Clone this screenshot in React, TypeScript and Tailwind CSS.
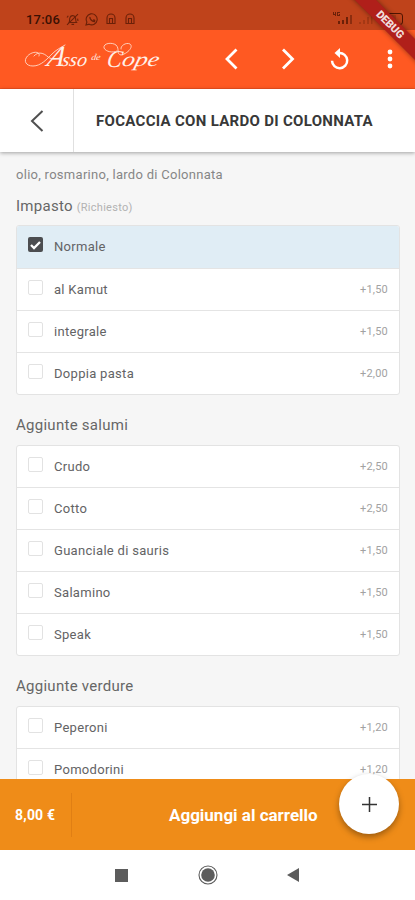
import { clsx } from "clsx";

type Option = { name: string; price?: string; checked?: boolean };

const impasto: Option[] = [
  { name: "Normale", checked: true },
  { name: "al Kamut", price: "+1,50" },
  { name: "integrale", price: "+1,50" },
  { name: "Doppia pasta", price: "+2,00" },
];

const salumi: Option[] = [
  { name: "Crudo", price: "+2,50" },
  { name: "Cotto", price: "+2,50" },
  { name: "Guanciale di sauris", price: "+1,50" },
  { name: "Salamino", price: "+1,50" },
  { name: "Speak", price: "+1,50" },
];

const verdure: Option[] = [
  { name: "Peperoni", price: "+1,20" },
  { name: "Pomodorini", price: "+1,20" },
];

function StatusBar() {
  return (
    <div className="h-[30px] shrink-0 bg-[#bf431b] flex items-center pt-[8px] pl-[26px] pr-[12px] text-[#6b2008]">
      <span className="text-[13px] leading-none font-medium tracking-[0.2px] text-[#3a1003] w-[40px]">
        17:06
      </span>
      {/* muted bell */}
      <svg className="w-[13px] h-[13px]" viewBox="0 0 13 13" fill="none" stroke="currentColor" strokeWidth="1.1">
        <path d="M3 9.5C4 8 3.3 6 4 4.5 5 2.2 8 2 9.3 4.2 10 6 9.3 8 10.6 9.5ZM5.5 11.4h2.6M1 11.8 12 1.2M1 4.5 2.3 2.7M12 8 11.6 5.6" />
      </svg>
      {/* whatsapp */}
      <svg className="w-[14px] h-[13px] ml-[6px]" viewBox="0 0 14 13" fill="none" stroke="currentColor" strokeWidth="1.1">
        <path d="M1 12 1.9 9A5.5 5.5 0 1 1 4.2 11.2Z" />
        <path d="M5 4C4.6 6 7 8.7 9.4 8.6L9.6 7.4 8.3 6.7" strokeWidth="1.4" />
      </svg>
      {[0, 1].map((i) => (
        <svg
          key={i}
          className={clsx("w-[10px] h-[12px]", i === 0 ? "ml-[7px]" : "ml-[9px]")}
          viewBox="0 0 10 12"
          fill="none"
          stroke="currentColor"
          strokeWidth="1.1"
        >
          <path d="M1 10.5V5a4 4 0 0 1 8 0v5.5ZM3.5 10V5.5h3V10" />
        </svg>
      ))}
      {/* 4G signal, second sim without coverage */}
      <svg className="ml-auto w-[42px] h-[14px]" viewBox="0 0 42 14" fill="currentColor">
        <path d="M1 0h1v2h1V0h1v4H3V3H1ZM5 0h3v1H6v2h1V2h1v2H5Z" />
        <path d="M6 9h2v3H6ZM10 8h2v4h-2ZM14 5h2v7h-2Z" />
        <path opacity=".6" d="M18 3h2v9h-2Z" />
        <path opacity=".3" d="M27 10h2v2h-2ZM31 8h2v4h-2ZM35 5h2v7h-2ZM39 3h1.5v9H39Z" />
      </svg>
      <div className="ml-[5px] w-[24px] h-[12px] rounded-[3px] border border-[#501400] p-px">
        <div className="h-full w-[15px] bg-[#501400]/20" />
      </div>
    </div>
  );
}

function DebugRibbon() {
  return (
    <div className="absolute right-0 top-0 w-[90px] h-[90px] overflow-hidden">
      <div className="absolute left-[5px] top-[17px] w-[120px] h-[15px] rotate-45 bg-[#b01f1a] shadow-[0_0_5px_rgba(0,0,0,0.45)] text-center text-[11px] leading-[15px] font-black tracking-[-0.2px] text-[#f0dcdc]">
        DEBUG
      </div>
    </div>
  );
}

function Logo() {
  return (
    <svg
      className="w-[140px] h-[36px] shrink-0"
      viewBox="0 0 140 36"
      fill="none"
      stroke="#ffd9c8"
      strokeWidth="0.9"
      strokeLinecap="round"
      fontFamily="'Liberation Serif', serif"
      fontStyle="italic"
    >
      {/* flourishes around the wordmark */}
      <path d="M15 15C17 10 8 10 3.5 15 -1 20 2 25 9 25 17 25 23 18 28 13 32 9 36 7 41 4" />
      <path d="M10 15C14 10 20 12 24 16 28 19 33 18 38 16" />
      <path d="M93 10C89 12 82 11 80 7 79 2 88 1 92 4 96 8 92 13 97 14 103 13 110 6 106 3 102 1 96 5 97 8" />
      <g fill="#fff0e9" stroke="none">
        <text transform="translate(22 25) skewX(-20)" fontSize="29" textLength="16" lengthAdjust="spacingAndGlyphs">
          A
        </text>
        <text transform="translate(37 25) skewX(-12)" fontSize="19" textLength="25" lengthAdjust="spacingAndGlyphs">
          sso
        </text>
        <text transform="translate(67 19) skewX(-10)" fontSize="9" textLength="9" lengthAdjust="spacingAndGlyphs">
          de
        </text>
        <text transform="translate(82 26) skewX(-10)" fontSize="24" textLength="15" lengthAdjust="spacingAndGlyphs">
          C
        </text>
        <text transform="translate(97 25) skewX(-14)" fontSize="20" textLength="37" lengthAdjust="spacingAndGlyphs">
          ope
        </text>
      </g>
    </svg>
  );
}

function AppBar() {
  return (
    <div className="h-[59px] shrink-0 bg-[#ff5922] border-b border-[#f0501e] flex items-center pl-[24px] text-white">
      <Logo />
      <svg className="ml-[60px] w-[14px] h-[22px]" viewBox="0 0 14 22" fill="none" stroke="currentColor" strokeWidth="2.8">
        <path d="M12.5 1.5 3 11 12.5 20.5" />
      </svg>
      <svg className="ml-[43px] w-[14px] h-[22px]" viewBox="0 0 14 22" fill="none" stroke="currentColor" strokeWidth="2.8">
        <path d="M2 1.5 11.5 11 2 20.5" />
      </svg>
      <svg className="ml-[35px] w-[20px] h-[22px]" viewBox="0 0 20 22" fill="none" stroke="currentColor" strokeWidth="2.5">
        <path d="M9 5A7.6 7.6 0 1 1 2 12.8" />
        <path d="M10 0V10L4.5 5Z" fill="currentColor" stroke="none" />
      </svg>
      <svg className="ml-[37px] w-[6px] h-[20px]" viewBox="0 0 6 20" fill="currentColor">
        <circle cx="3" cy="3" r="2.4" />
        <circle cx="3" cy="10" r="2.4" />
        <circle cx="3" cy="17" r="2.4" />
      </svg>
    </div>
  );
}

function Checkbox({ checked }: { checked?: boolean }) {
  if (checked) {
    return (
      <span className="w-[15px] h-[15px] rounded-[2px] bg-[#4c4d50] flex items-center justify-center">
        <svg className="w-[11px] h-[10px]" viewBox="0 0 11 10" fill="none" stroke="#fff" strokeWidth="2.3">
          <path d="M1 5 4 8 10 2" />
        </svg>
      </span>
    );
  }
  return <span className="w-[15px] h-[15px] rounded-[2px] border border-[#e2e2e2] bg-white" />;
}

function OptionList({ options }: { options: Option[] }) {
  return (
    <div className="rounded-[3px] border border-[#e3e3e3] bg-white overflow-hidden">
      {options.map((o, i) => (
        <div
          key={o.name}
          className={clsx(
            "flex items-center pl-[11px] pr-[11px]",
            i < options.length - 1 && "border-b border-[#e4e4e4]",
            o.checked ? "h-[43px] bg-[#e0edf5]" : i === options.length - 1 ? "h-[41px]" : "h-[42px]"
          )}
        >
          <span className="pb-[5px] flex">
            <Checkbox checked={o.checked} />
          </span>
          <span className="ml-[11px] text-[13px] leading-[18px] tracking-[0.3px] text-[#636365]">{o.name}</span>
          <span className="ml-auto text-[11px] leading-[18px] tracking-[0.2px] text-[#a2a2a2]">{o.price}</span>
        </div>
      ))}
    </div>
  );
}

export default function App() {
  return (
    <div className="relative w-[415px] h-[900px] overflow-hidden flex flex-col bg-white font-['Roboto',sans-serif]">
      <StatusBar />
      <AppBar />

      <header className="relative h-[63px] shrink-0 bg-white flex shadow-[0_1px_4px_rgba(0,0,0,0.35)]">
        <div className="w-[74px] border-r border-[#e0e0e0] flex items-center justify-center">
          <svg className="w-[14px] h-[22px]" viewBox="0 0 14 22" fill="none" stroke="#505050" strokeWidth="2">
            <path d="M12.5 1 2 11 12.5 21" />
          </svg>
        </div>
        <h1 className="pl-[22px] leading-[65px] text-[15px] font-bold tracking-[0.3px] text-[#383838] whitespace-nowrap">
          FOCACCIA CON LARDO DI COLONNATA
        </h1>
      </header>

      <main className="h-[627px] shrink-0 overflow-hidden bg-[#f6f6f6] pl-[16px] pr-[15px]">
        <p className="mt-[13px] text-[13px] leading-[20px] tracking-[0.28px] text-[#868686]">
          olio, rosmarino, lardo di Colonnata
        </p>
        <h2 className="mt-[10px] h-[30px] text-[15px] leading-[22px] tracking-[0.27px] text-[#666]">
          Impasto <span className="text-[11px] text-[#b2b2b2]">(Richiesto)</span>
        </h2>
        <OptionList options={impasto} />
        <h2 className="mt-[19px] h-[31px] text-[15px] leading-[22px] tracking-[0.27px] text-[#666]">Aggiunte salumi</h2>
        <OptionList options={salumi} />
        <h2 className="mt-[19px] h-[31px] text-[15px] leading-[22px] tracking-[0.27px] text-[#666]">Aggiunte verdure</h2>
        <OptionList options={verdure} />
      </main>

      <footer className="h-[71px] shrink-0 bg-[#ef8c18] flex items-center text-white font-bold">
        <div className="w-[72px] h-[44px] border-r border-[#e07f14] pl-[15px] text-[14px] leading-[44px] tracking-[0.2px]">
          8,00 €
        </div>
        <div className="pl-[97px] text-[17px] leading-[44px] whitespace-nowrap">Aggiungi al carrello</div>
      </footer>

      <nav className="h-[50px] flex items-center pl-[115px]">
        <div className="w-[13px] h-[13px] bg-[#5c5c5c]" />
        <svg className="ml-[70px] w-[20px] h-[20px]" viewBox="0 0 20 20" fill="#5c5c5c">
          <circle cx="10" cy="10" r="9" fill="none" stroke="#5c5c5c" strokeWidth="1.1" />
          <circle cx="10" cy="10" r="6.8" />
        </svg>
        <svg className="ml-[69px] w-[12px] h-[14px]" viewBox="0 0 12 14" fill="#5c5c5c">
          <path d="M12 0v14L0 7Z" />
        </svg>
      </nav>

      <button className="absolute left-[339px] top-[774px] w-[60px] h-[60px] rounded-full bg-white shadow-[0_3px_6px_rgba(0,0,0,0.35)] flex items-center justify-center">
        <svg className="w-[15px] h-[15px]" viewBox="0 0 15 15" fill="none" stroke="#333" strokeWidth="1.5">
          <path d="M7.5 0v15M0 7.5h15" />
        </svg>
      </button>

      <DebugRibbon />
    </div>
  );
}
